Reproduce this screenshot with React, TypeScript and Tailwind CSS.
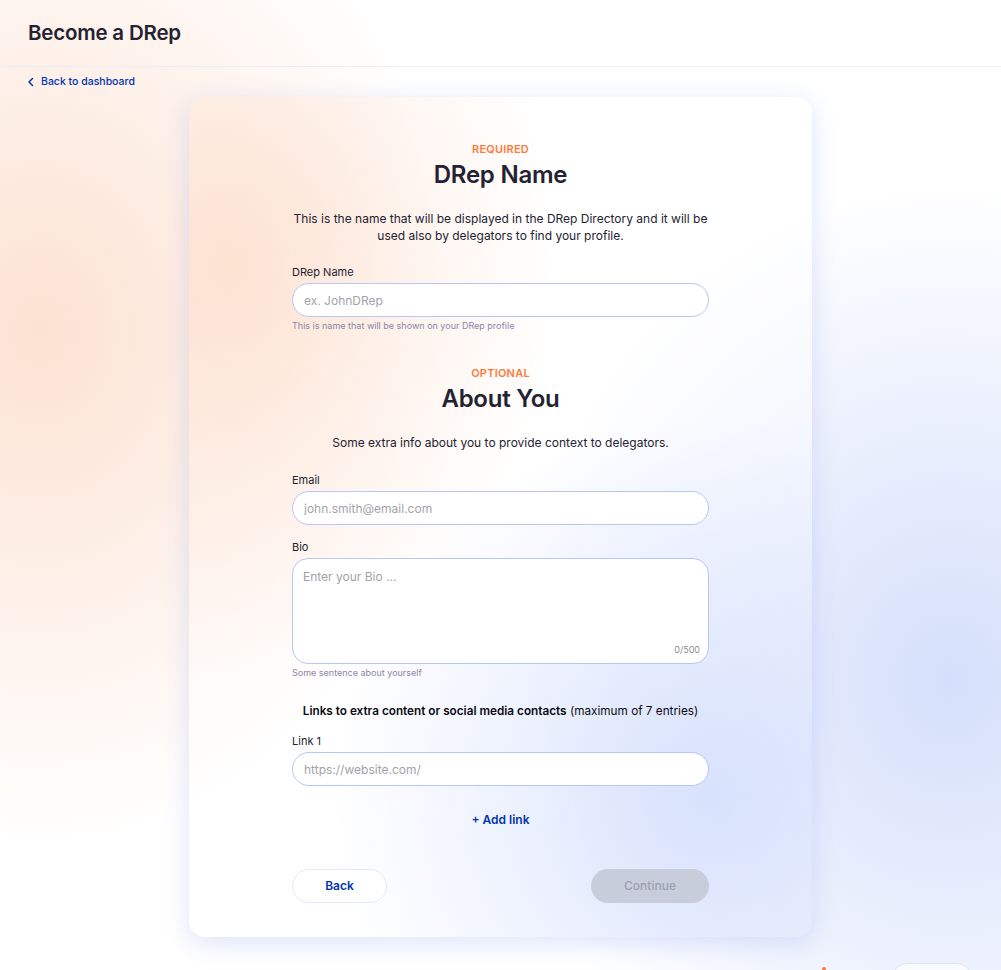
import { useState } from "react";

const font = { fontFamily: "Inter, 'Noto Sans', sans-serif" };

function Field({
  label,
  placeholder,
  helper,
}: {
  label: string;
  placeholder: string;
  helper?: string;
}) {
  return (
    <div className="flex flex-col">
      <label className="text-[11px] text-[#242232] mb-[4px] leading-[14px]">{label}</label>
      <input
        placeholder={placeholder}
        className="h-[34px] w-full rounded-full border border-[#b7c6f6] bg-white px-[11px] text-[12px] text-[#242232] placeholder:text-[#a3a3a8] outline-none"
      />
      {helper && (
        <p className="mt-[3px] text-[9px] leading-[12px] text-[#8c86aa]">{helper}</p>
      )}
    </div>
  );
}

function SectionHead({ tag, title, children }: { tag: string; title: string; children: React.ReactNode }) {
  return (
    <div className="flex flex-col items-center text-center">
      <span className="text-[11px] font-semibold tracking-[0.02em] text-[#ff7a3d] leading-[14px]">{tag}</span>
      <h2 className="mt-[5px] text-[24px] font-semibold tracking-[-0.01em] text-[#242232] leading-[28px]">{title}</h2>
      <p className="mt-[21px] text-[12px] leading-[17px] text-[#242232]">{children}</p>
    </div>
  );
}

export default function App() {
  const [bio, setBio] = useState("");

  return (
    <div
      style={font}
      className="relative min-h-screen overflow-hidden bg-white bg-[radial-gradient(ellipse_420px_520px_at_40px_330px,#fce2d2_0%,rgba(252,226,210,0.55)_45%,rgba(255,255,255,0)_100%),radial-gradient(ellipse_440px_500px_at_950px_680px,#d5dffb_0%,rgba(213,223,251,0.55)_45%,rgba(255,255,255,0)_100%)]"
    >
      {/* Header */}
      <header className="h-[67px] border-b border-[#eceef6] flex items-center px-[28px] pt-[1px]">
        <h1 className="text-[20.5px] font-semibold text-[#242232] tracking-[-0.01em]">Become a DRep</h1>
      </header>

      <div className="px-[27px] pt-[2px]">
        <a href="#" className="inline-flex items-center gap-[6px] text-[10.5px] font-medium text-[#0033ad]">
          <svg width="8" height="10" viewBox="0 0 8 10" fill="none">
            <path d="M5.5 1.5 2 5l3.5 3.5" stroke="#0033ad" strokeWidth="1.5" strokeLinecap="round" strokeLinejoin="round" />
          </svg>
          Back to dashboard
        </a>
      </div>

      {/* Card */}
      <main className="flex justify-center pt-[4px] pb-[34px]">
        <div className="w-[623px] rounded-[16px] bg-white/40 bg-[radial-gradient(ellipse_330px_420px_at_40px_170px,rgba(252,225,208,0.95)_0%,rgba(252,225,208,0.4)_50%,rgba(255,255,255,0)_100%),radial-gradient(ellipse_380px_380px_at_520px_700px,rgba(214,224,252,0.95)_0%,rgba(214,224,252,0.45)_50%,rgba(255,255,255,0)_100%)] shadow-[0_6px_26px_rgba(150,170,240,0.32)] px-[103px] pt-[45px] pb-[34px]">
          <SectionHead tag="REQUIRED" title="DRep Name">
            This is the name that will be displayed in the DRep Directory and it will be
            <br />
            used also by delegators to find your profile.
          </SectionHead>

          <div className="mt-[21px]">
            <Field label="DRep Name" placeholder="ex. JohnDRep" helper="This is name that will be shown on your DRep profile" />
          </div>

          <div className="mt-[34px]">
            <SectionHead tag="OPTIONAL" title="About You">
              Some extra info about you to provide context to delegators.
            </SectionHead>
          </div>

          <div className="mt-[22px]">
            <Field label="Email" placeholder="john.smith@email.com" />
          </div>

          <div className="mt-[15px] flex flex-col">
            <label className="text-[11px] text-[#242232] mb-[4px] leading-[14px]">Bio</label>
            <div className="relative">
              <textarea
                value={bio}
                onChange={(e) => setBio(e.target.value)}
                placeholder="Enter your Bio ..."
                className="block h-[106px] w-full resize-none rounded-[16px] border border-[#b7c6f6] bg-white px-[10px] py-[9px] text-[12px] text-[#242232] placeholder:text-[#a3a3a8] outline-none"
              />
              <span className="absolute right-[9px] bottom-[8px] text-[9px] text-[#8d8d92]">{bio.length}/500</span>
            </div>
            <p className="mt-[3px] text-[9px] leading-[12px] text-[#8c86aa]">Some sentence about yourself</p>
          </div>

          <p className="mt-[24px] text-center text-[11.75px] text-[#0b0b14] leading-[17px]">
            <span className="font-semibold">Links to extra content or social media contacts</span> (maximum of 7 entries)
          </p>

          <div className="mt-[14px]">
            <Field label="Link 1" placeholder="https://website.com/" />
          </div>

          <div className="mt-[25px] flex justify-center">
            <button className="text-[12px] font-semibold text-[#0033ad]">+ Add link</button>
          </div>

          <div className="mt-[40px] flex justify-between">
            <button className="h-[34px] w-[95px] rounded-full border border-[#e3e8fa] bg-white text-[12px] font-semibold text-[#0033ad]">
              Back
            </button>
            <button className="h-[34px] w-[118px] rounded-full bg-[#c8cddc] text-[12px] font-medium text-[#9ca1b2]">
              Continue
            </button>
          </div>
        </div>
      </main>

      {/* floating bits at the bottom edge */}
      <div className="absolute left-[822px] top-[967px] h-[4px] w-[4px] rounded-full bg-[#ff7a3d]" />
      <div className="absolute left-[892px] top-[963px] h-[30px] w-[80px] rounded-full border border-[#dfe5f8] bg-white/70" />
    </div>
  );
}
